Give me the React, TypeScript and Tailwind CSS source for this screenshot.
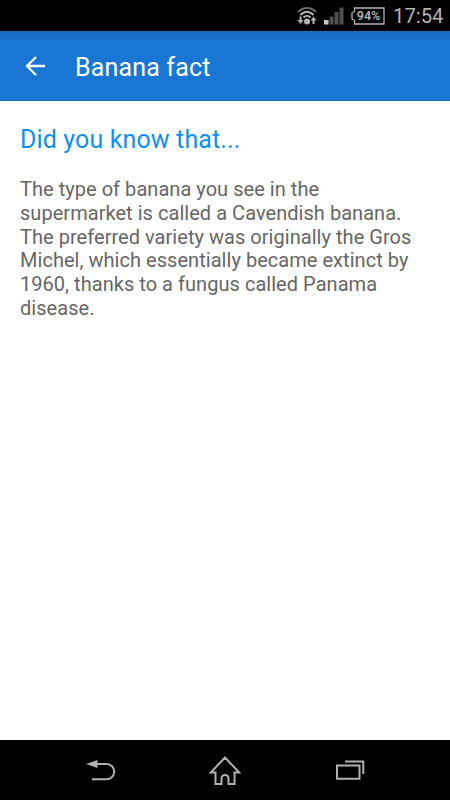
import React from 'react';

const factLines = [
  'The type of banana you see in the',
  'supermarket is called a Cavendish banana.',
  'The preferred variety was originally the Gros',
  'Michel, which essentially became extinct by',
  '1960, thanks to a fungus called Panama',
  'disease.',
];

const StatusBar: React.FC = () => (
  <div className="h-[31px] bg-black flex items-center justify-end text-[#b4b4b4]">
    <svg width="20" height="20" viewBox="0 0 20 20" fill="none" stroke="currentColor" className="mr-[7px]">
      <path d="M1 6C6 0.500 14 0.500 19 6" stroke="#6a6a6a" strokeWidth="2" />
      <path d="M3.500 9C7.500 4.500 12.500 4.500 16.500 9" strokeWidth="2" />
      <path d="M6.500 11.500C8.500 9.500 11.500 9.500 13.500 11.500" strokeWidth="2" />
      <circle cx="10" cy="15.500" r="3" fill="currentColor" stroke="none" />
      <path d="M3.500 10.500v5M16.500 18v-5" strokeWidth="2" />
      <path d="M0.500 14h6l-3 4zM13.500 14.500h6l-3-4z" fill="currentColor" stroke="none" />
    </svg>
    <svg width="20" height="18" viewBox="0 0 20 18" className="mr-[7px]">
      <rect x="0" y="13" width="4.500" height="4.500" fill="#c8c8c8" />
      <path d="M5.500 9.500h4v8h-4zM10.500 5h4v12.500h-4zM15.500 0.500h4v17h-4z" fill="#505050" />
    </svg>
    <div className="relative w-[34px] h-[18px] flex items-center justify-center">
      <svg width="34" height="18" viewBox="0 0 34 18" fill="none" className="absolute inset-0">
        <path d="M3.500 1H33v16H3.500v-3.500L1 12V6l2.500-1.500z" stroke="currentColor" strokeWidth="1.300" />
      </svg>
      <span className="relative text-[12.5px] leading-none font-semibold pl-px pt-[2px]">94%</span>
    </div>
    <span className="w-[50px] ml-[8px] mr-[7px] text-[20.3px] leading-none whitespace-nowrap pt-px">17:54</span>
  </div>
);

const NavBar: React.FC = () => (
  <div className="h-[60px] bg-black flex items-center justify-center gap-[93px]">
    <svg width="32" height="32" viewBox="0 0 32 32" fill="none" stroke="#b0b0b0" strokeWidth="2">
      <path d="M10 10h12.700a7.600 7.600 0 0 1 0 15.200H8" />
      <path d="M2 10L13.500 6v8z" fill="#b0b0b0" stroke="none" />
    </svg>
    <svg width="32" height="32" viewBox="0 0 32 32" fill="none" stroke="#b0b0b0" strokeWidth="2">
      <path d="M16 3.500L1.800 18.500H6.500v11.500h6v-5.500a3.500 3.500 0 0 1 7 0v5.500h6v-11.500h4.700z" />
    </svg>
    <svg width="32" height="32" viewBox="0 0 32 32" fill="none" stroke="#b0b0b0" strokeWidth="2">
      <path d="M3 11.500h22.500v13.200H3zM11 7.500h18.300v12.500" />
    </svg>
  </div>
);

const App: React.FC = () => (
  <div className="w-[450px] h-[800px] flex flex-col bg-white font-['Roboto','Liberation_Sans',sans-serif] overflow-hidden">
    <StatusBar />
    <header className="h-[70px] bg-linear-to-b from-[#186bbd] to-[#1976d2] to-[10px] border-b border-[#1668c4] flex items-center text-white">
      <button aria-label="Back" className="ml-[25px] mr-[29px] pt-px">
        <svg width="21" height="20" viewBox="0 0 21 20" fill="none" stroke="currentColor" strokeWidth="2.300">
          <path d="M20 10H2M11 1L2 10l9 9" />
        </svg>
      </button>
      <h1 className="text-[25px] leading-none tracking-[0.16px] pt-[3px]">Banana fact</h1>
    </header>
    <main className="flex-1 px-5 pt-[23px]">
      <h2 className="text-[25px] leading-8 tracking-[0.13px] text-[#0d90f2]">Did you know that...</h2>
      <p className="mt-[22px] text-[20px] leading-[23.8px] tracking-[0.04px] text-[#666] whitespace-nowrap">
        {factLines.map((line) => (
          <span key={line} className="block">{line}</span>
        ))}
      </p>
    </main>
    <NavBar />
  </div>
);

export default App;
